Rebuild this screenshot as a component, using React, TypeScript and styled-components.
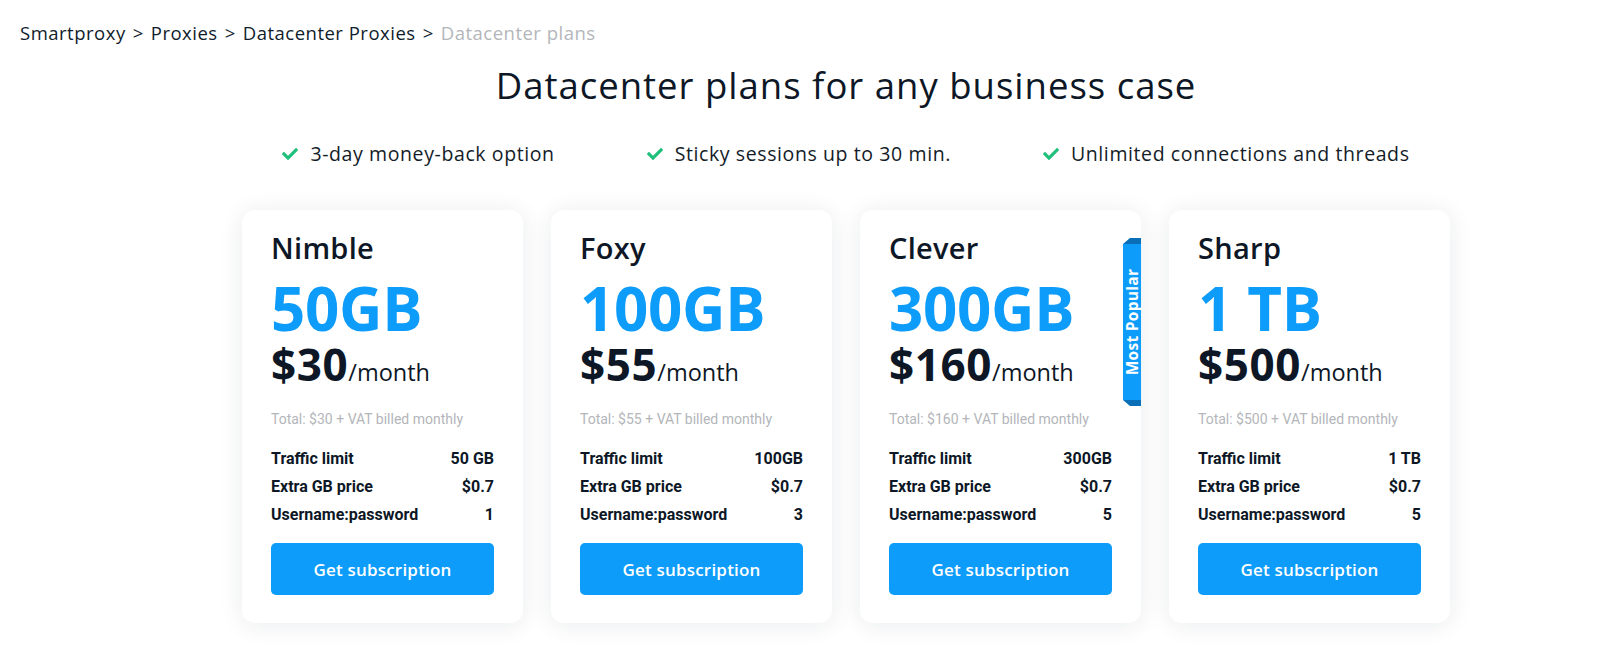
import styled, { createGlobalStyle } from "styled-components";
import { FaCheck } from "react-icons/fa";

const GlobalStyle = createGlobalStyle`
  body {
    margin: 0;
    background: #ffffff;
    font-family: "Open Sans", "Noto Sans", sans-serif;
    color: #0d1726;
  }
`;

const Page = styled.div`
  width: 1600px;
  height: 655px;
  overflow: hidden;
  padding-top: 20px;
  box-sizing: border-box;
`;

const Breadcrumb = styled.nav`
  display: flex;
  gap: 7px;
  padding-left: 20px;
  font-size: 18.5px;
  line-height: 26px;
  letter-spacing: 0.5px;
  color: #101c2c;
`;

const Crumb = styled.span<{ $current?: boolean }>`
  color: ${(p) => (p.$current ? "#b3b6ba" : "#101c2c")};
`;

const Main = styled.main`
  width: 1208px;
  margin-left: 242px;
  display: flex;
  flex-direction: column;
  align-items: center;
`;

const Title = styled.h1`
  margin: 17px 0 0;
  font-size: 36.5px;
  line-height: 44px;
  font-weight: 500;
  letter-spacing: 1px;
  color: #0d1726;
`;

const Features = styled.ul`
  list-style: none;
  margin: 33px 0 0;
  padding: 0;
  display: flex;
  gap: 92px;
  font-size: 19.5px;
  line-height: 28px;
  letter-spacing: 0.6px;
`;

const Feature = styled.li`
  display: flex;
  align-items: center;
  gap: 12px;
  color: #141c28;

  svg {
    color: #1fbf7c;
    font-size: 16px;
  }
`;

const Cards = styled.div`
  margin-top: 42px;
  display: grid;
  grid-template-columns: repeat(4, 281px);
  gap: 28px;
`;

const Card = styled.article`
  position: relative;
  background: #fff;
  border-radius: 13px;
  box-shadow: 0 2px 24px rgba(20, 30, 50, 0.09);
  padding: 20px 29px 28px;
  display: flex;
  flex-direction: column;
`;

const Name = styled.h2`
  margin: 0;
  font-size: 29px;
  line-height: 36px;
  font-weight: 600;
  letter-spacing: 0.3px;
  color: #0d1726;
`;

const Volume = styled.div`
  margin-top: 12px;
  font-size: 60px;
  line-height: 61px;
  font-weight: 700;
  letter-spacing: -0.3px;
  color: #0d9cfa;
`;

const Price = styled.div`
  font-size: 44px;
  line-height: 50px;
  font-weight: 700;
  letter-spacing: 0.6px;
  color: #0d1726;

  span {
    font-size: 23.5px;
    font-weight: 500;
    letter-spacing: 0;
  }
`;

const Total = styled.div`
  margin-top: 13px;
  font-family: Roboto, "Liberation Sans", sans-serif;
  font-size: 14px;
  line-height: 18px;
  color: #b3b6ba;
`;

const Specs = styled.dl`
  margin: 21px 0 0;
  display: grid;
  grid-template-columns: 1fr auto;
  row-gap: 8px;
  font-family: Roboto, "Liberation Sans", sans-serif;
  font-size: 16px;
  line-height: 20px;
  font-weight: 700;
  color: #0d1726;

  dt,
  dd {
    margin: 0;
  }

  dd {
    text-align: right;
  }
`;

const Button = styled.button`
  margin-top: 18px;
  height: 52px;
  border: none;
  border-radius: 5px;
  background: #0d9cfa;
  color: #fff;
  font-family: inherit;
  font-size: 17px;
  font-weight: 600;
  letter-spacing: 0.2px;
  cursor: pointer;
`;

const Ribbon = styled.div`
  position: absolute;
  top: 28px;
  right: 0;
  width: 18px;
  height: 168px;
  display: flex;
  align-items: center;
  justify-content: center;
`;

const RibbonShape = styled.svg`
  position: absolute;
  inset: 0;
`;

const RibbonText = styled.span`
  position: relative;
  transform: rotate(-90deg);
  white-space: nowrap;
  color: #fff;
  font-size: 15.5px;
  font-weight: 700;
  letter-spacing: 0.3px;
`;

type Plan = {
  name: string;
  volume: string;
  price: number;
  traffic: string;
  users: number;
  popular?: boolean;
};

const plans: Plan[] = [
  { name: "Nimble", volume: "50GB", price: 30, traffic: "50 GB", users: 1 },
  { name: "Foxy", volume: "100GB", price: 55, traffic: "100GB", users: 3 },
  { name: "Clever", volume: "300GB", price: 160, traffic: "300GB", users: 5, popular: true },
  { name: "Sharp", volume: "1 TB", price: 500, traffic: "1 TB", users: 5 },
];

const features = [
  "3-day money-back option",
  "Sticky sessions up to 30 min.",
  "Unlimited connections and threads",
];

export default function App() {
  return (
    <Page>
      <GlobalStyle />
      <Breadcrumb>
        <Crumb>Smartproxy</Crumb>
        <Crumb>&gt;</Crumb>
        <Crumb>Proxies</Crumb>
        <Crumb>&gt;</Crumb>
        <Crumb>Datacenter Proxies</Crumb>
        <Crumb>&gt;</Crumb>
        <Crumb $current>Datacenter plans</Crumb>
      </Breadcrumb>
      <Main>
        <Title>Datacenter plans for any business case</Title>
        <Features>
          {features.map((f) => (
            <Feature key={f}>
              <FaCheck />
              {f}
            </Feature>
          ))}
        </Features>
        <Cards>
          {plans.map((p) => (
            <Card key={p.name}>
              {p.popular && (
                <Ribbon>
                  <RibbonShape viewBox="0 0 18 168" preserveAspectRatio="none">
                    <rect x="0" y="6" width="18" height="156" fill="#0d9cfa" />
                    <polygon points="0,6 7,0 18,0 18,6" fill="#0a6fb8" />
                    <polygon points="0,162 18,162 18,168 7,168" fill="#0a6fb8" />
                  </RibbonShape>
                  <RibbonText>Most Popular</RibbonText>
                </Ribbon>
              )}
              <Name>{p.name}</Name>
              <Volume>{p.volume}</Volume>
              <Price>
                ${p.price}
                <span>/month</span>
              </Price>
              <Total>Total: ${p.price} + VAT billed monthly</Total>
              <Specs>
                <dt>Traffic limit</dt>
                <dd>{p.traffic}</dd>
                <dt>Extra GB price</dt>
                <dd>$0.7</dd>
                <dt>Username:password</dt>
                <dd>{p.users}</dd>
              </Specs>
              <Button>Get subscription</Button>
            </Card>
          ))}
        </Cards>
      </Main>
    </Page>
  );
}
